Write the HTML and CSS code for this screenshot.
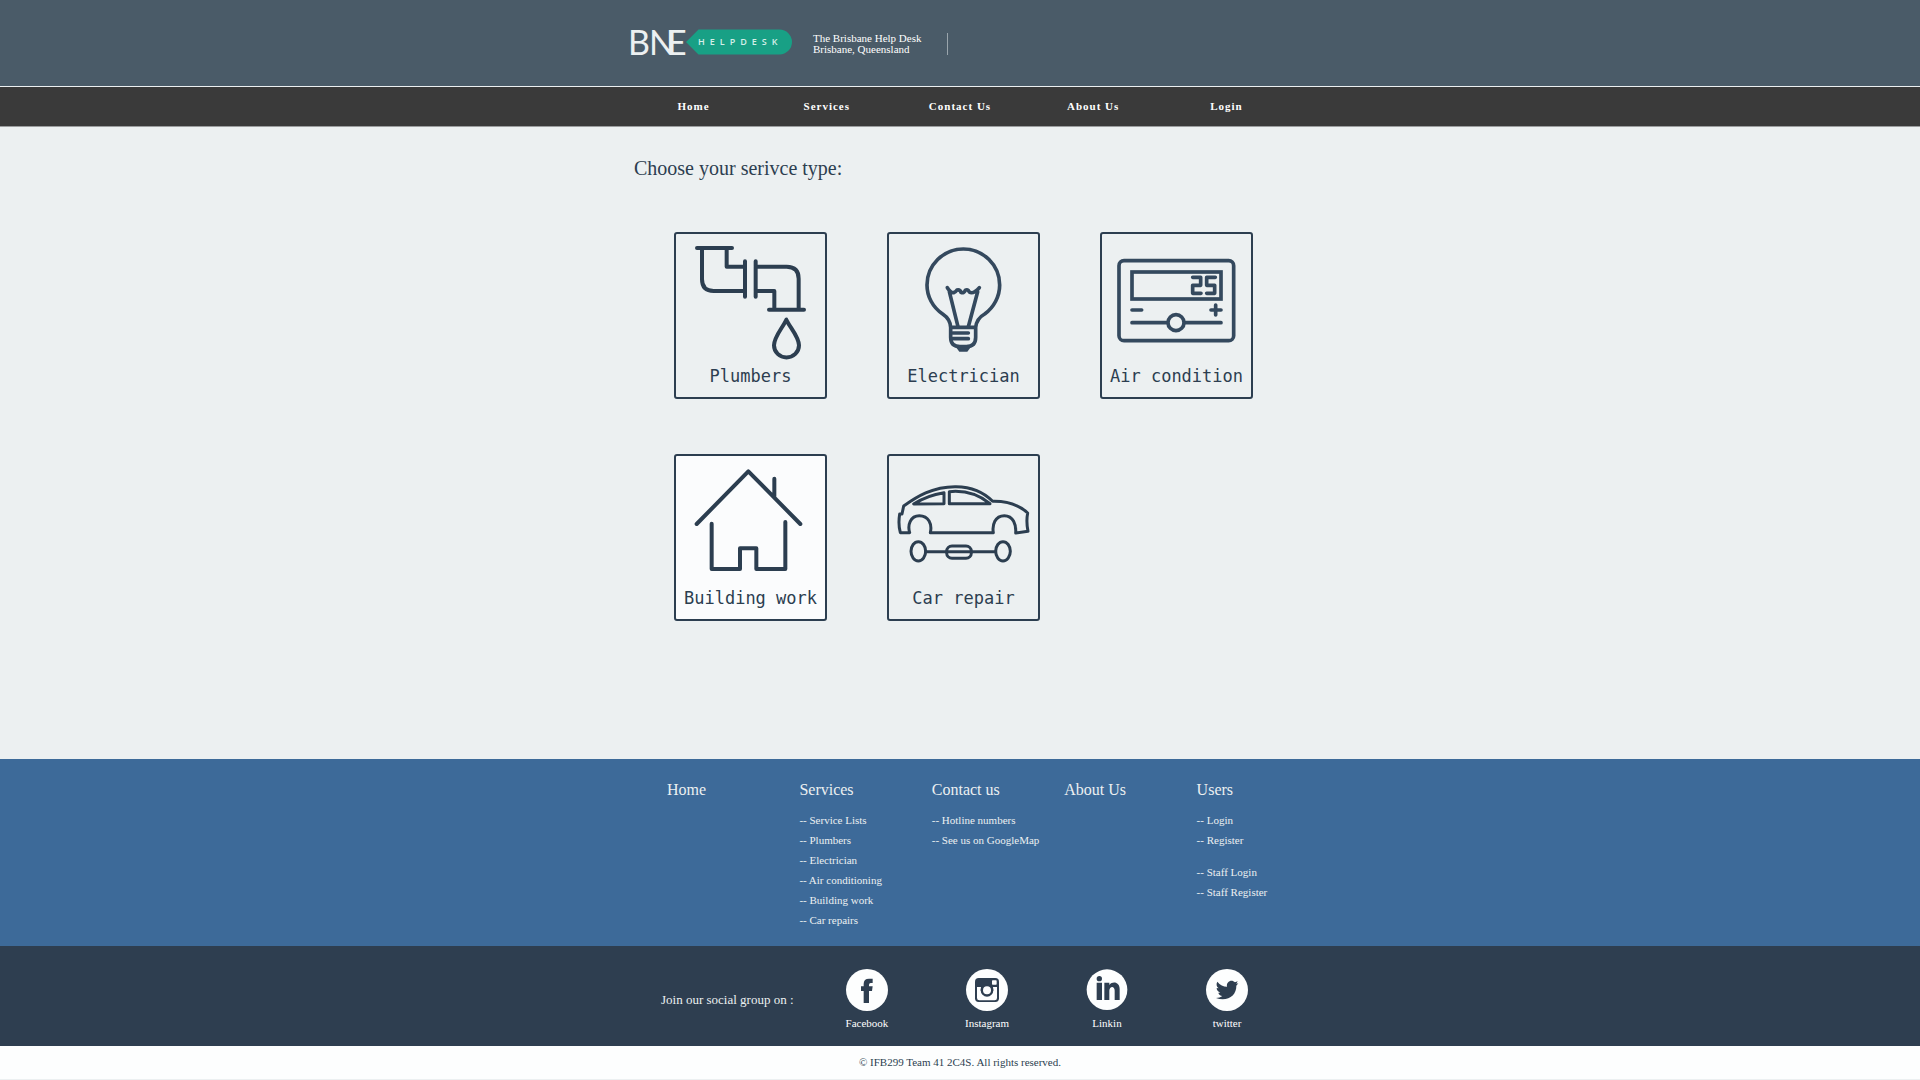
FILE: index.html
```html
<!DOCTYPE html>
<html lang="en">
<head>
<meta charset="utf-8">
<meta name="viewport" content="width=device-width, initial-scale=1">
<title>BNE Helpdesk</title>
<link rel="stylesheet" href="styles.css">
</head>
<body>
<header class="site-header">
  <div class="container brand">
    <a class="logo" href="#" aria-label="BNE Helpdesk">
      <svg width="163" height="26" viewBox="0 0 163 26">
        <path class="logo-tag" d="M56 13 68.500 0.500H149.500A12.500 12.500 0 0 1 149.500 25.500H68.500Z"/>
        <text class="logo-name" y="26"><tspan x="-2">B</tspan><tspan x="19">N</tspan><tspan x="37">E</tspan></text>
        <text class="logo-label" x="68" y="16">HELPDESK</text>
      </svg>
    </a>
    <p class="tagline">The Brisbane Help Desk<br>Brisbane, Queensland</p>
  </div>
</header>

<nav class="main-nav">
  <ul class="container nav-list">
    <li><a href="#">Home</a></li>
    <li><a href="#">Services</a></li>
    <li><a href="#">Contact Us</a></li>
    <li><a href="#">About Us</a></li>
    <li><a href="#">Login</a></li>
  </ul>
</nav>

<main class="container services">
  <h1>Choose your serivce type:</h1>
  <div class="cards">
    <a class="card" href="#">
      <svg class="art" viewBox="48 42 447 378">
        <path d="M111 84H216M126 84V178Q126 213 161 213H255M200 84V140H255M255 124V230M287 124V230M287 140H380Q416 140 416 176V269M287 213H343V269M327 269H432"/>
        <path d="M379 299C370 320 342 350 342 376A37 36 0 0 0 417 376C417 350 388 320 379 299Z"/>
      </svg>
      <span>Plumbers</span>
    </a>
    <a class="card" href="#">
      <svg class="art light" viewBox="39 42 447 378">
        <path d="M224 322C223 302 215 292 200 282C170 262 153 229 153 195A109 108 0 0 1 371 195C371 229 354 262 326 282C308 292 301 304 299 322ZM224 322V352Q224 380 252 380H271Q299 380 299 352V322"/>
        <path d="M246 320 220 215M277 320 305 215M214 203Q224 219 233 218Q239 216 243 210Q252 208 255 217Q263 221 268 211Q275 206 280 216Q291 224 310 203"/>
        <path d="M230 339H277M230 356H277"/>
        <path class="fill" d="M240 382H284L274 395H250Z"/>
      </svg>
      <span>Electrician</span>
    </a>
    <a class="card" href="#">
      <svg class="art light" viewBox="36 42 447 378">
        <rect x="87" y="122" width="344" height="240" rx="15"/>
        <rect class="sharp" x="126" y="156" width="267" height="81"/>
        <path d="M126 270H155M363 270H393M377 255V285M126 308H231M285 308H393"/>
        <circle cx="258" cy="308" r="24"/>
        <path d="M308 172H332V196H308V220H333M376 172H350V196H374V220H350"/>
      </svg>
      <span>Air condition</span>
    </a>
    <a class="card card-active" href="#">
      <svg class="art" viewBox="48 33 447 378">
        <path d="M110 237 265 79 421 237M343 101V154L331 146"/>
        <path d="M155 236V372H240V310H289V372H376V231"/>
      </svg>
      <span>Building work</span>
    </a>
    <a class="card" href="#">
      <svg class="art thin" viewBox="39 33 447 378">
        <path d="M101 263H73Q66 238 71 207H78L83 183C120 157 170 124 240 125C290 126 325 143 350 169C395 168 427 178 455 204Q450 230 456 259L419 264C421 240 412 212 385 212C357 212 348 240 352 263H163C169 237 158 212 130 212C103 212 94 240 101 263Z"/>
        <path d="M113 177Q153 151 204 143V176ZM220 140V176H342C311 151 271 135 220 140Z"/>
        <ellipse cx="127" cy="319" rx="22" ry="29"/>
        <ellipse cx="381" cy="319" rx="22" ry="29"/>
        <rect x="212" y="303" width="74" height="37" rx="16"/>
        <path d="M149 320H359"/>
      </svg>
      <span>Car repair</span>
    </a>
  </div>
</main>

<footer>
  <div class="sitemap">
    <div class="container sitemap-grid">
      <section><h2><a href="#">Home</a></h2></section>
      <section>
        <h2><a href="#">Services</a></h2>
        <ul>
          <li><a href="#">-- Service Lists</a></li>
          <li><a href="#">-- Plumbers</a></li>
          <li><a href="#">-- Electrician</a></li>
          <li><a href="#">-- Air conditioning</a></li>
          <li><a href="#">-- Building work</a></li>
          <li><a href="#">-- Car repairs</a></li>
        </ul>
      </section>
      <section>
        <h2><a href="#">Contact us</a></h2>
        <ul>
          <li><a href="#">-- Hotline numbers</a></li>
          <li><a href="#">-- See us on GoogleMap</a></li>
        </ul>
      </section>
      <section><h2><a href="#">About Us</a></h2></section>
      <section>
        <h2><a href="#">Users</a></h2>
        <ul>
          <li><a href="#">-- Login</a></li>
          <li><a href="#">-- Register</a></li>
        </ul>
        <ul>
          <li><a href="#">-- Staff Login</a></li>
          <li><a href="#">-- Staff Register</a></li>
        </ul>
      </section>
    </div>
  </div>

  <div class="social">
    <div class="container social-grid">
      <p>Join our social group on :</p>
      <a href="#">
        <svg width="42" height="42" viewBox="0 0 126 126">
          <circle class="disc" cx="63" cy="63" r="63"/>
          <path class="glyph" d="M53 102V66H45V52H53V45Q53 29 69 29H80V42H74Q69 42 69 48V52H80L78 66H69V102Z"/>
        </svg>
        Facebook
      </a>
      <a href="#">
        <svg width="42" height="42" viewBox="0 0 126 126">
          <circle class="disc" cx="63" cy="63" r="63"/>
          <rect class="glyph" x="27" y="27" width="72" height="72" rx="11"/>
          <path class="disc" d="M33 54H45A19 19 0 1 0 81 54H93V87Q93 94 86 94H40Q33 94 33 87Z"/>
          <rect class="disc" x="78" y="34" width="14" height="13" rx="2"/>
          <circle class="glyph" cx="63" cy="64" r="19"/>
          <circle class="disc" cx="63" cy="64" r="12"/>
        </svg>
        Instagram
      </a>
      <a href="#">
        <svg width="42" height="42" viewBox="0 0 126 126">
          <circle class="disc" cx="63" cy="62" r="61"/>
          <circle class="glyph" cx="40" cy="29" r="8"/>
          <path class="glyph" d="M32 41H48V93H32ZM55 41H70V48C81 35 101 40 101 60V93H86V65C86 49 70 51 70 65V93H55Z"/>
        </svg>
        Linkin
      </a>
      <a href="#">
        <svg width="42" height="42" viewBox="0 0 126 126">
          <circle class="disc" cx="63" cy="63" r="63"/>
          <path class="glyph" d="M34 38C42 48 52 53 63 53C60 38 77 29 87 40L95 37L91 44L97 43L91 50C92 79 65 99 30 87C38 87 44 85 49 81C43 80 38 76 37 71H43C36 68 32 63 32 57L38 58C31 53 30 45 34 38Z"/>
        </svg>
        twitter
      </a>
    </div>
  </div>

  <p class="copyright">© IFB299 Team 41 2C4S. All rights reserved.</p>
</footer>
</body>
</html>
```
FILE: styles.css
```css
* {
  box-sizing: border-box;
}

body,
h1,
h2,
p,
ul {
  margin: 0;
  padding: 0;
}

body {
  background: #ecf0f1;
  color: #2c3e50;
  font-family: "Liberation Serif", "Times New Roman", serif;
  font-size: 11px;
}

ul {
  list-style: none;
}

a {
  color: inherit;
  text-decoration: none;
}

svg {
  display: block;
}

.container {
  width: 100%;
  max-width: 666px;
  margin: 0 auto;
}

/* Header */

.site-header {
  padding: 29px 0 31px;
  background: #4a5b68;
  border-bottom: 1px solid #ecf0f1;
  color: #fff;
}

.brand {
  display: flex;
  align-items: flex-end;
  gap: 20px;
  padding-left: 3px;
}

.logo svg {
  overflow: visible;
}

.tagline {
  padding-right: 26px;
  border-right: 1px solid #9aa5ac;
  line-height: 11px;
}

.logo-tag {
  fill: #18a085;
}

.logo-name {
  fill: #ecf0f1;
  font-family: Lato, sans-serif;
  font-size: 34px;
}

.logo-label {
  fill: #d5efe9;
  font-family: "Open Sans", sans-serif;
  font-size: 9px;
  font-weight: 600;
  letter-spacing: 5px;
}

/* Navigation */

.main-nav {
  background: #3a3a3a;
  border-bottom: 1px solid #9b9d9e;
  color: #fff;
}

.nav-list {
  display: grid;
  grid-template-columns: repeat(5, 1fr);
  font-weight: bold;
  letter-spacing: 1px;
  line-height: 39px;
  text-align: center;
}

/* Service cards */

.services {
  padding: 29px 0 138px;
}

.services h1 {
  margin-bottom: 52px;
  padding-left: 7px;
  font-size: 20px;
  font-weight: normal;
  line-height: 24px;
}

.cards {
  display: flex;
  flex-wrap: wrap;
  gap: 55px 60px;
  padding-left: 47px;
}

.card {
  width: 153px;
  border: 2px solid #2c3e50;
  border-radius: 3px;
  font-family: "DejaVu Sans Mono", monospace;
  font-size: 17px;
  line-height: 32px;
  padding-bottom: 5px;
  text-align: center;
}

.card span {
  display: block;
  white-space: nowrap;
}

.card-active {
  background: #fbfcfd;
}

.art {
  width: 149px;
  height: 126px;
  fill: none;
  stroke: #2c3e50;
  stroke-width: 12;
  stroke-linecap: round;
  stroke-linejoin: round;
}

.art.light {
  stroke: #34495e;
  stroke-width: 11;
}

.art.thin {
  stroke-width: 9;
}

.art .sharp {
  stroke-linejoin: miter;
}

.art .fill {
  fill: #34495e;
  stroke: none;
}

/* Footer */

.sitemap {
  padding: 21px 0 16px;
  background: #3d6a99;
  color: #ecf0f1;
}

.sitemap-grid {
  display: grid;
  grid-template-columns: repeat(5, minmax(0, 1fr));
  padding-right: 4px;
}

.sitemap section {
  padding-left: 40px;
  line-height: 20px;
  white-space: nowrap;
}

.sitemap h2 {
  font-size: 16px;
  font-weight: normal;
}

.sitemap ul {
  margin-top: 10px;
}

.sitemap ul + ul {
  margin-top: 12px;
}

.social {
  padding: 23px 0 15px;
  background: #2e3e50;
  color: #fff;
}

.social-grid {
  display: grid;
  grid-template-columns: 180px repeat(4, 120px);
  align-items: center;
  line-height: 16px;
}

.social-grid p {
  padding-left: 34px;
  color: #ecf0f1;
  font-size: 13px;
  white-space: nowrap;
}

.social-grid a {
  display: flex;
  flex-direction: column;
  align-items: center;
  gap: 4px;
}

.disc {
  fill: #fdfefe;
}

.glyph {
  fill: #2e3e50;
}

.copyright {
  background: #fdfefe;
  line-height: 33px;
  text-align: center;
}
```
